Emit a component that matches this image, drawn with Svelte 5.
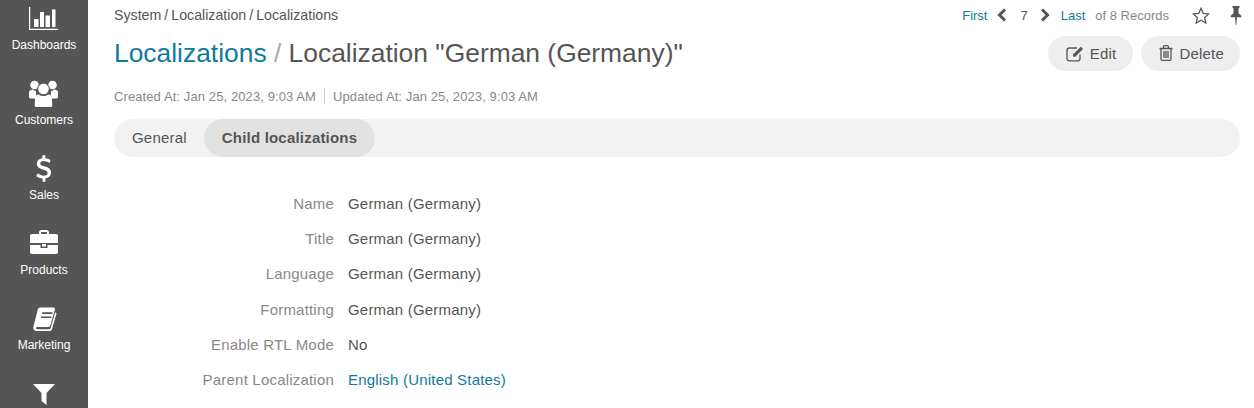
<script>
  const navItems = [
    { id: 'dash', label: 'Dashboards' },
    { id: 'cust', label: 'Customers' },
    { id: 'sales', label: 'Sales' },
    { id: 'prod', label: 'Products' },
    { id: 'mkt', label: 'Marketing' },
    { id: 'filter', label: '' }
  ];

  const fields = [
    { label: 'Name', value: 'German (Germany)' },
    { label: 'Title', value: 'German (Germany)' },
    { label: 'Language', value: 'German (Germany)' },
    { label: 'Formatting', value: 'German (Germany)' },
    { label: 'Enable RTL Mode', value: 'No' },
    { label: 'Parent Localization', value: 'English (United States)', link: true }
  ];
</script>

<div class="shell">
  <nav class="sidebar">
    {#each navItems as item}
      <div class="nav-item">
        <svg class="nav-icon" width="32" height="32" viewBox="0 0 32 32" fill="#fff">
          {#if item.id === 'dash'}
            <path d="M1 4h1.200v21.800H30V27H1z" />
            <rect x="6" y="16" width="4.500" height="8" />
            <rect x="12" y="9" width="4" height="15" />
            <rect x="17.500" y="12.500" width="4.500" height="11.500" />
            <rect x="24" y="6.500" width="3.500" height="17.500" />
          {:else if item.id === 'cust'}
            <circle cx="6.500" cy="7" r="4.300" />
            <circle cx="24.500" cy="7" r="4.300" />
            <path d="M1 14c0-1.500 2-2.500 4-2.500 1 1 2 1.500 3 1.500-.3 3 .5 6 2 7.500H2.500c-1 0-1.500-1-1.500-2zM30 14c0-1.500-2-2.500-4-2.500-1 1-2 1.500-3 1.500.3 3-.5 6-2 7.500h7.500c1 0 1.500-1 1.500-2z" />
            <circle cx="15.500" cy="11" r="5.800" stroke="#555" stroke-width="1" />
            <path d="M7 21c0-2.500 1.500-4.500 4-4.500 1.200 1 2.800 1.500 4.500 1.500s3.300-.5 4.500-1.500c2.500 0 4 2 4 4.500l.3 6.500c0 1-.8 1.500-2 1.500H8.700c-1.200 0-2-.5-2-1.500z" />
          {:else if item.id === 'sales'}
            <path transform="translate(1.100 .8) scale(.93)" d="M14.500 1.500h3v3.300c2.400.3 4.300 1.100 5.700 2.100l-1.500 2.900c-1.800-1.200-3.900-2-6-2-2.400 0-3.700 1-3.700 2.500 0 1.800 1.900 2.400 4.600 3.200 3.600 1.100 7 2.500 7 6.700 0 3.500-2.400 5.800-6.100 6.300v3.500h-3v-3.400c-2.700-.3-5.100-1.300-6.800-2.800l1.700-2.800c1.900 1.600 4.200 2.500 6.500 2.500 2.500 0 4-1.100 4-2.900 0-1.900-1.800-2.600-4.700-3.500-3.400-1-6.900-2.300-6.900-6.300 0-3.300 2.300-5.500 5.700-6z" />
          {:else if item.id === 'prod'}
            <path d="M11 6V4.500C11 3.100 12.100 2 13.500 2h5C19.900 2 21 3.100 21 4.500V6h-2V4.500c0-.3-.2-.5-.5-.5h-5c-.3 0-.5.2-.5.500V6z" />
            <path d="M4 6h24c1.100 0 2 .9 2 2v7H2V8c0-1.100.9-2 2-2z" />
            <path d="M2 17h10.500v3h7v-3H30v7c0 1.100-.9 2-2 2H4c-1.100 0-2-.9-2-2z" />
            <rect x="14" y="16" width="4" height="2.500" />
          {:else if item.id === 'mkt'}
            <g transform="translate(3.200 2.800) scale(.86 .82)">
              <path d="M10 2h16c1.500 0 2 1 1.600 2.400L22.500 23c-.4 1.400-1.500 3-3.500 3H7.500c-1 0-1.800.4-1.800 1.300 0 .9.800 1.200 1.800 1.200H21c.8 0 1.300-.5 1.500-1.200L28 8l1.500 1-5.200 19c-.5 1.700-1.800 2.800-3.500 2.800H7c-2.800 0-5-2-4.500-5L7.500 5C8 3.200 8.800 2 10 2z" />
              <rect x="12" y="8" width="12" height="2" fill="#555" transform="skewX(-14) translate(3 0)" />
              <rect x="11" y="13" width="12" height="2" fill="#555" transform="skewX(-14) translate(4 0)" />
            </g>
          {:else}
            <path d="M5 6h22l-8.500 9v12l-5-4v-8z" />
          {/if}
        </svg>
        {#if item.label}<span class="nav-label">{item.label}</span>{/if}
      </div>
    {/each}
  </nav>

  <main class="content">
    <div class="topbar">
      <div class="crumbs">System<span class="slash">/</span>Localization<span class="slash">/</span>Localizations</div>
      <div class="pager">
        <span class="link">First</span>
        <svg class="chev" width="10" height="14" viewBox="0 0 10 14"><path d="M8 1.500 2.500 7 8 12.500" /></svg>
        <span class="page-no">7</span>
        <svg class="chev" width="10" height="14" viewBox="0 0 10 14"><path d="M2 1.500 7.500 7 2 12.500" /></svg>
        <span class="link">Last</span>
        <span class="records">of 8 Records</span>
        <svg class="star" width="18" height="17" viewBox="0 0 18 17"><path d="M9 1.300l2.300 5 5.400.6-4 3.700 1.100 5.400L9 13.300 4.200 16l1.100-5.400-4-3.700 5.400-.6z" /></svg>
        <svg class="pin" width="12" height="19" viewBox="0 0 12 19"><path d="M2.500 0h7v1.500L8.500 2.500v5c1.700.8 3 2 3 3.800H7L6.300 19h-.6L5 11.300H.5c0-1.800 1.300-3 3-3.800v-5l-1-1z" /></svg>
      </div>
    </div>

    <div class="title-row">
      <h1><span class="link">Localizations</span> <span class="sep">/</span> Localization "German (Germany)"</h1>
      <div class="actions">
        <button class="btn">
          <svg width="18" height="17" viewBox="0 0 18 17" fill="none" stroke="#555">
            <path d="M14 9.500V13.500c0 1.400-1 2.300-2.300 2.300H3.300C2 15.800 1 14.900 1 13.500V5.300C1 4 2 3 3.300 3H11" stroke-width="1.300" />
            <path d="M7 9.500 14.800 1.700l2.200 2.200-7.800 7.800H7z" fill="#555" stroke="none" />
          </svg>
          Edit
        </button>
        <button class="btn">
          <svg width="14" height="16" viewBox="0 0 14 16" fill="none" stroke="#555" stroke-width="1.300">
            <path d="M.5 3.500h13M2 3.500v10.300c0 1 .6 1.600 1.500 1.600h7c.9 0 1.500-.6 1.500-1.600V3.500M4.500 3.500V2c0-.8.500-1.300 1.300-1.300h2.400c.8 0 1.300.5 1.300 1.300v1.500M5 6v7M7 6v7M9 6v7" />
          </svg>
          Delete
        </button>
      </div>
    </div>

    <div class="meta">
      <span>Created At: Jan 25, 2023, 9:03 AM</span>
      <span class="meta-sep"></span>
      <span>Updated At: Jan 25, 2023, 9:03 AM</span>
    </div>

    <div class="tabs">
      <div class="tab first">General</div>
      <div class="tab active">Child localizations</div>
    </div>

    <dl class="fields">
      {#each fields as f}
        <div class="field">
          <dt>{f.label}</dt>
          <dd class:link={f.link}>{f.value}</dd>
        </div>
      {/each}
    </dl>
  </main>
</div>

<style>
  :global(body) {
    margin: 0;
    background: #fff;
    overflow: hidden;
  }

  .shell {
    display: flex;
    height: 408px;
    overflow: hidden;
    font-family: "Liberation Sans", Arial, sans-serif;
    color: #555;
  }

  .sidebar {
    width: 88px;
    flex: none;
    background: #555;
    display: flex;
    flex-direction: column;
    align-items: center;
    margin-top: -10px;
    height: 418px;
    overflow: hidden;
  }

  .nav-item {
    height: 75px;
    flex: none;
    display: flex;
    flex-direction: column;
    align-items: center;
    padding-top: 13px;
    box-sizing: border-box;
  }

  .nav-icon {
    display: block;
  }

  .nav-label {
    font-size: 12px;
    line-height: 14px;
    margin-top: 3px;
    color: #fff;
  }

  .content {
    flex: 1;
    min-width: 0;
    padding: 0 14px 0 26px;
  }

  .topbar {
    display: flex;
    justify-content: space-between;
    align-items: center;
    height: 30px;
  }

  .crumbs {
    font-size: 14.200px;
  }

  .slash {
    margin: 0 3px;
  }

  .pager {
    display: flex;
    align-items: center;
    font-size: 13px;
    margin-right: -2px;
  }

  .link {
    color: #0f7a9c;
  }

  .chev {
    fill: none;
    stroke: #555;
    stroke-width: 3;
    margin-left: 10px;
  }

  .page-no {
    margin: 0 2px 0 13px;
  }

  .pager .chev + .link {
    margin-left: 11px;
  }

  .records {
    margin-left: 10px;
    color: #888;
  }

  .star {
    fill: none;
    stroke: #555;
    stroke-width: 1.300;
    margin-left: 23px;
  }

  .pin {
    fill: #555;
    margin-left: 20px;
  }

  .title-row {
    display: flex;
    justify-content: space-between;
    align-items: center;
    height: 46px;
  }

  h1 {
    margin: 0;
    font-size: 26.400px;
    font-weight: 400;
    color: #555;
  }

  .sep {
    color: #aaa;
  }

  .actions {
    display: flex;
    gap: 8px;
  }

  .btn {
    display: flex;
    align-items: center;
    gap: 6px;
    height: 35px;
    padding: 0 17px 0 18px;
    border: 0;
    border-radius: 18px;
    background: #eee;
    color: #555;
    font: 400 15px "Liberation Sans", Arial, sans-serif;
    letter-spacing: .2px;
  }

  .btn:last-child {
    padding-right: 16px;
  }

  .meta {
    display: flex;
    align-items: center;
    gap: 8px;
    height: 20px;
    margin-top: 10px;
    font-size: 13px;
    letter-spacing: .1px;
    color: #888;
  }

  .meta-sep {
    width: 1px;
    height: 16px;
    background: #ccc;
  }

  .tabs {
    display: flex;
    height: 38px;
    margin-top: 13px;
    border-radius: 19px;
    background: #f2f2f2;
  }

  .tab {
    display: flex;
    align-items: center;
    padding: 0 18px 1px;
    border-radius: 19px;
    font-size: 15px;
    letter-spacing: .2px;
  }

  .tab.first {
    padding-right: 17px;
  }

  .tab.active {
    background: #e2e2e2;
    font-weight: 700;
  }

  .fields {
    margin: 29px 0 0;
  }

  .field {
    display: flex;
    height: 35.200px;
    align-items: center;
    font-size: 15px;
    letter-spacing: .2px;
  }

  dt {
    width: 220px;
    text-align: right;
    color: #888;
  }

  dd {
    margin: 0 0 0 14px;
  }

  dd.link {
    color: #0f7a9c;
  }
</style>
